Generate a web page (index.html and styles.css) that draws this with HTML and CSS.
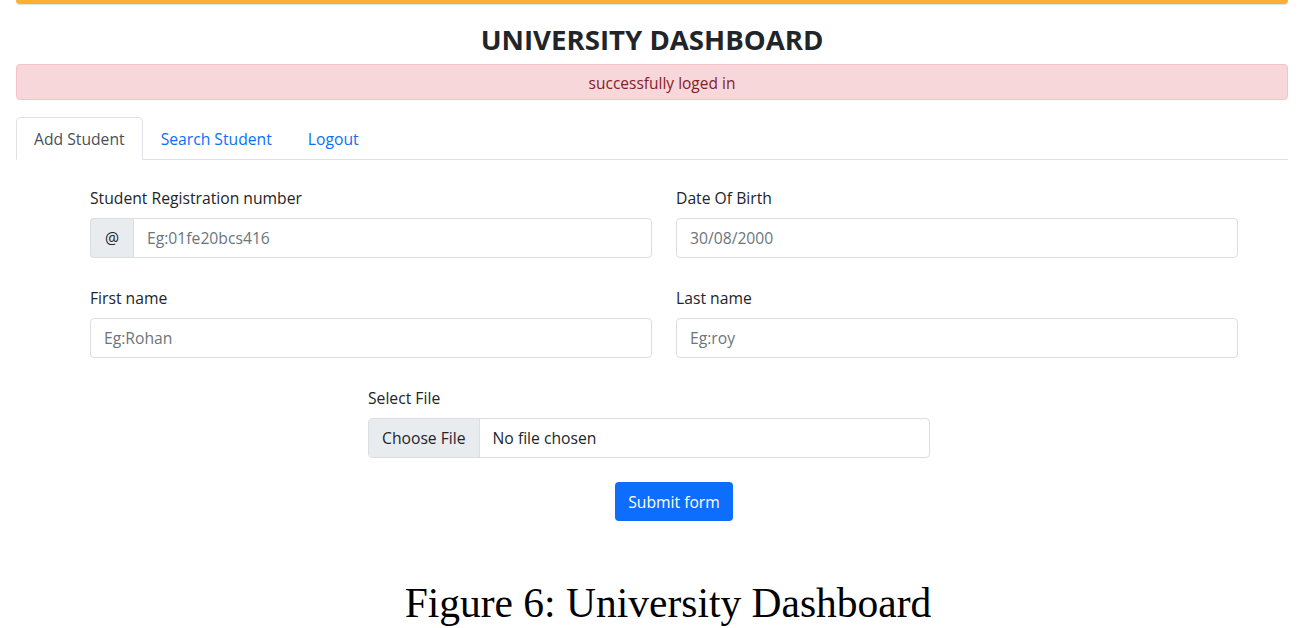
FILE: index.html
```html
<!DOCTYPE html>
<html>
<head>
<meta charset="utf-8">
<link rel="stylesheet" href="styles.css">
</head>
<body>
<div class="page">
  <div class="topbar"></div>
  <h1 class="title">UNIVERSITY DASHBOARD</h1>
  <div class="alert">successfully loged in</div>
  <ul class="tabs">
    <li class="tab active">Add Student</li>
    <li class="tab">Search Student</li>
    <li class="tab">Logout</li>
  </ul>
  <form class="form">
    <div class="grid">
      <div class="field">
        <label class="label">Student Registration number</label>
        <div class="group">
          <span class="addon">@</span>
          <input class="input in-group" placeholder="Eg:01fe20bcs416">
        </div>
      </div>
      <div class="field">
        <label class="label">Date Of Birth</label>
        <input class="input" placeholder="30/08/2000">
      </div>
      <div class="field">
        <label class="label">First name</label>
        <input class="input" placeholder="Eg:Rohan">
      </div>
      <div class="field">
        <label class="label">Last name</label>
        <input class="input" placeholder="Eg:roy">
      </div>
    </div>
    <div class="filefield">
      <label class="label">Select File</label>
      <div class="file">
        <span class="choose">Choose File</span>
        <span class="nofile">No file chosen</span>
      </div>
    </div>
    <div class="actions">
      <button type="button" class="btn">Submit form</button>
    </div>
  </form>
  <p class="caption">Figure 6: University Dashboard</p>
</div>
</body>
</html>
```
FILE: styles.css
```css
* { box-sizing: border-box; }
body {
  margin: 0;
  background: #fff;
  font-family: "Open Sans", "Noto Sans", sans-serif;
  color: #212529;
}
.page {
  width: 1272px;
  margin-left: 16px;
}
.topbar {
  height: 4px;
  background: #ffad33;
  border-radius: 0 0 4px 4px;
  box-shadow: 0 1px 1px #cfe6dc;
}
.title {
  margin: 20px 0 0;
  height: 40px;
  text-align: center;
  font-size: 27.6px;
  font-weight: 700;
  line-height: 30px;
  color: #212529;
}
.alert {
  height: 36px;
  background: #f8d7da;
  border: 1px solid #f5c2c7;
  border-radius: 4px;
  color: #842029;
  font-size: 15.5px;
  line-height: 36px;
  text-align: center;
  padding-left: 20px;
}
.tabs {
  list-style: none;
  margin: 17px 0 0;
  padding: 0;
  display: flex;
  border-bottom: 1px solid #dee2e6;
  height: 43px;
}
.tab {
  padding: 0 17px;
  font-size: 15.7px;
  line-height: 42px;
  color: #0d6efd;
  border: 1px solid transparent;
  border-radius: 5px 5px 0 0;
  margin-bottom: -1px;
}
.tab.active {
  color: #495057;
  background: #fff;
  border-color: #dee2e6 #dee2e6 #fff;
}
.form {
  margin: 0;
}
.grid {
  margin: 28px 0 0 74px;
  width: 1148px;
  display: grid;
  grid-template-columns: 562px 562px;
  column-gap: 24px;
  row-gap: 30px;
}
.label {
  display: block;
  font-size: 15.7px;
  line-height: 20px;
  margin-bottom: 10px;
  color: #212529;
}
.input {
  display: block;
  width: 100%;
  height: 40px;
  border: 1px solid #dadde1;
  border-radius: 4px;
  padding: 0 13px;
  font-family: inherit;
  font-size: 15.7px;
  color: #212529;
  outline: none;
}
.input::placeholder { color: #6c757d; }
.group {
  display: flex;
  height: 40px;
}
.addon {
  width: 43px;
  flex: none;
  background: #e9ecef;
  border: 1px solid #dadde1;
  border-right: none;
  border-radius: 4px 0 0 4px;
  text-align: center;
  line-height: 38px;
  font-size: 15.7px;
  color: #212529;
}
.input.in-group {
  flex: 1;
  border-radius: 0 4px 4px 0;
}
.filefield {
  margin: 30px 0 0 352px;
  width: 562px;
}
.file {
  display: flex;
  height: 40px;
  border: 1px solid #dadde1;
  border-radius: 4px;
  overflow: hidden;
  font-size: 15.7px;
  line-height: 38px;
}
.choose {
  background: #e9ecef;
  padding: 0 13px;
  border-right: 1px solid #dadde1;
  color: #212529;
}
.nofile {
  padding-left: 13px;
  color: #212529;
}
.actions {
  display: flex;
  justify-content: center;
  margin: 24px 0 0 44px;
}
.btn {
  width: 118px;
  height: 39px;
  background: #0d6efd;
  border: none;
  border-radius: 4px;
  color: #fff;
  font-family: inherit;
  font-size: 15.7px;
}
.caption {
  margin: 58px 0 0;
  text-align: center;
  font-family: "Liberation Serif", serif;
  font-size: 41.5px;
  line-height: 48px;
  color: #000;
  padding-left: 32px;
}
```
